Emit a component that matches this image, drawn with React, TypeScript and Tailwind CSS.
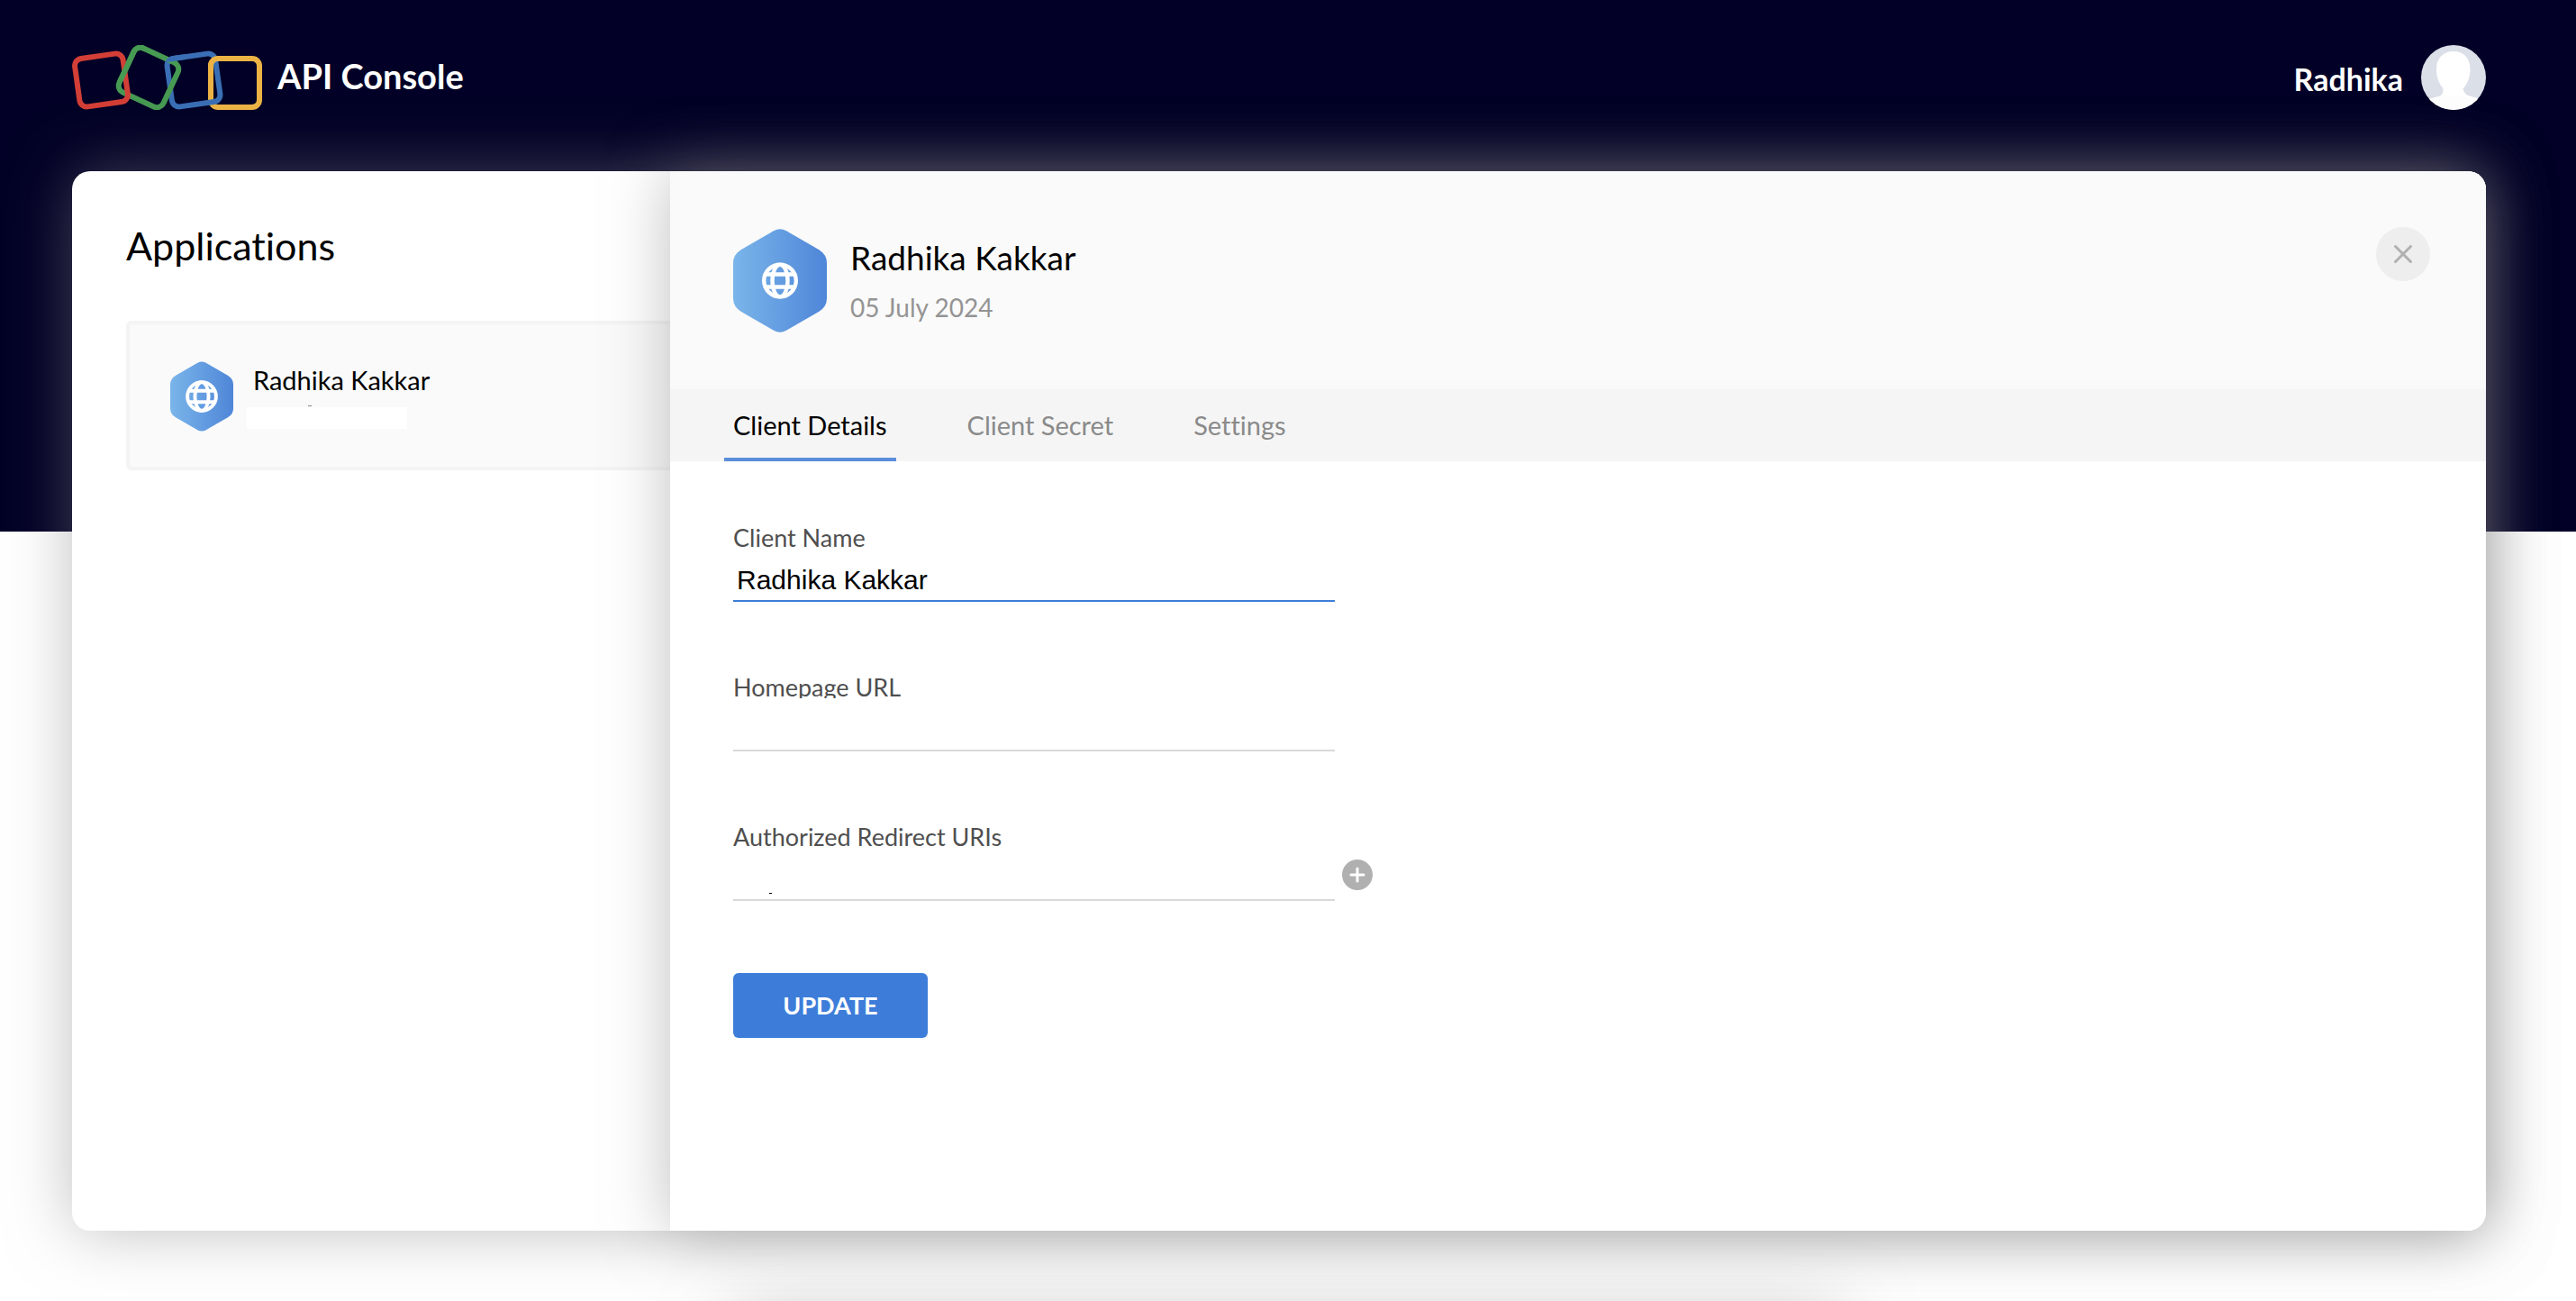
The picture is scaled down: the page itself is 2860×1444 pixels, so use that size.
import type { ReactNode } from "react";

function Logo() {
  return (
    <svg viewBox="0 0 212 72" className="h-18 w-53" fill="none" strokeWidth="6" aria-hidden="true">
      <defs>
        <clipPath id="weave-red-green">
          <rect x="40" y="0" width="40" height="40" />
        </clipPath>
        <clipPath id="weave-green-blue">
          <rect x="102" y="6" width="24" height="12.500" />
        </clipPath>
        <clipPath id="weave-blue-yellow">
          <rect x="148" y="0" width="30" height="34" />
        </clipPath>
      </defs>
      <rect x="154" y="15" width="54" height="54" rx="8" stroke="#ecb344" />
      <rect x="108" y="12" width="54" height="54" rx="8" stroke="#3a6fb5" transform="rotate(-8 135 39)" />
      <rect x="58" y="9" width="54" height="54" rx="8" stroke="#479a52" transform="rotate(25 85 36)" />
      <rect x="5.500" y="12" width="54" height="54" rx="8" stroke="#d33f36" transform="rotate(-8 32.500 39)" />
      <g clipPath="url(#weave-red-green)">
        <rect x="58" y="9" width="54" height="54" rx="8" stroke="#479a52" transform="rotate(25 85 36)" />
      </g>
      <g clipPath="url(#weave-green-blue)">
        <rect x="108" y="12" width="54" height="54" rx="8" stroke="#3a6fb5" transform="rotate(-8 135 39)" />
      </g>
      <g clipPath="url(#weave-blue-yellow)">
        <rect x="154" y="15" width="54" height="54" rx="8" stroke="#ecb344" />
      </g>
    </svg>
  );
}

function Hexagon({ className, id, globe }: { className: string; id: string; globe: number }) {
  const scale = globe / 40;
  return (
    <svg viewBox="0 0 104 115" className={className} aria-hidden="true">
      <defs>
        <linearGradient id={id} x1="0" y1="0" x2="1" y2="0">
          <stop offset="0" stopColor="#7ab5ea" />
          <stop offset="1" stopColor="#4f86d8" />
        </linearGradient>
      </defs>
      <path
        fill={`url(#${id})`}
        d="M45 2.2Q52 -1.6 59 2.2L95 23Q104 28.500 104 38V77Q104 86.500 95 92L59 112.800Q52 116.600 45 112.800L9 92Q0 86.500 0 77V38Q0 28.500 9 23Z"
      />
      <g transform={`translate(52 57.500) scale(${scale})`} fill="none" stroke="#fff" strokeWidth="4.400">
        <circle r="17.800" />
        <ellipse rx="8.500" ry="17.800" />
        <path d="M-16.500 -7H16.500M-16.500 7H16.500" />
      </g>
    </svg>
  );
}

function Avatar() {
  return (
    <svg viewBox="0 0 72 72" className="size-18 rounded-full" role="img" aria-label="Profile photo">
      <rect width="72" height="72" fill="#dbdfe8" />
      <path
        fill="#fff"
        d="M36 7C24 7 17 15 17 27C17 36 20 43 24.500 48C24.500 52 24 55 21 56.500L9 59.500V72H64V59.500L52 56C49 54.500 47.500 52 46.500 49C51 43.500 54.500 36 54.500 27C54.500 15 48 7 36 7Z"
      />
    </svg>
  );
}

function Field({ id, label, value, active, children }: { id: string; label: string; value?: string; active?: boolean; children?: ReactNode }) {
  return (
    <div>
      <label htmlFor={id} className="block h-[29px] text-[27px] leading-[34px] text-[#4f4f4f]">
        {label}
      </label>
      <div className="relative flex items-center gap-2">
        <input
          id={id}
          type="text"
          defaultValue={value}
          className={`h-[59px] w-full max-w-[668px] border-b-2 bg-white px-1 pt-3 font-['Liberation_Sans',Arial,sans-serif] text-[30px] text-black outline-none ${
            active ? "border-[#3d7dd9]" : "border-[#d9d9d9]"
          }`}
        />
        {children}
      </div>
    </div>
  );
}

const tabs = ["Client Details", "Client Secret", "Settings"];

export default function App() {
  return (
    <div className="relative flex min-h-screen flex-col overflow-hidden bg-white font-[Lato,sans-serif] text-black [font-variant-ligatures:none]">
      <div className="absolute inset-x-0 top-0 h-[590px] bg-[#020026]" />
      <header className="relative flex items-start justify-between pt-[50px] pr-[100px] pl-20 text-white">
        <a href="#" className="flex items-start gap-4">
          <Logo />
          <span className="pt-[11px] text-[38px] leading-[46px] font-bold">API Console</span>
        </a>
        <button type="button" className="flex items-center gap-5">
          <span className="pt-1 text-[34px] leading-10 font-bold">Radhika</span>
          <Avatar />
        </button>
      </header>

      <main className="relative mt-17 mr-[100px] mb-[78px] ml-20 flex flex-1 rounded-[20px] bg-white shadow-[0_0_70px_rgba(128,128,128,0.5)]">
        <section className="w-[664px] shrink-0 pt-14 pl-15">
          <h1 className="text-[43px] leading-[54px]">Applications</h1>
          <button
            type="button"
            className="mt-14 flex h-[166px] w-full items-center gap-[22px] rounded-l-md border-4 border-r-0 border-[#f4f4f4] bg-[#fafafa] pt-0.5 pl-[45px] text-left"
          >
            <Hexagon className="h-[78px] w-[70px]" id="hex-small" globe={53} />
            <span className="relative flex flex-col gap-3">
              <span className="text-[29px] leading-9">Radhika Kakkar</span>
              <span className="-ml-[7px] h-6 w-[178px] bg-white" />
              <span className="absolute top-[46px] left-[61px] h-px w-1 bg-[#888]" />
            </span>
          </button>
        </section>

        <section className="relative flex-1 rounded-r-[20px] bg-white shadow-[0_0_70px_rgba(128,128,128,0.5)]">
          <div className="flex h-[242px] justify-between rounded-tr-[20px] bg-[#fafafa] pt-16 pr-[62px] pl-[70px]">
            <div className="flex items-start gap-[26px]">
              <Hexagon className="h-[115px] w-[104px]" id="hex-large" globe={40} />
              <div className="pt-[9px]">
                <h2 className="text-[37px] leading-[46px]">Radhika Kakkar</h2>
                <p className="mt-[15px] text-[28px] leading-[34px] text-[#949494]">05 July 2024</p>
              </div>
            </div>
            <button type="button" aria-label="Close" className="-mt-0.5 flex size-15 items-center justify-center rounded-full bg-[#eee]">
              <svg viewBox="0 0 20 20" className="size-5 overflow-visible" stroke="#b0b0b0" strokeWidth="3" strokeLinecap="round" aria-hidden="true">
                <path d="M1.500 1.500L18.500 18.500M18.500 1.500L1.500 18.500" />
              </svg>
            </button>
          </div>

          <nav className="flex h-20 gap-[69px] bg-[#f5f5f5] pl-15">
            {tabs.map((tab, i) => (
              <button
                key={tab}
                type="button"
                className={`border-b-4 px-2.5 pt-1 text-[29px] ${i === 0 ? "border-[#5b8ddb] text-black" : "border-transparent text-[#8a8a8a]"}`}
              >
                {tab}
              </button>
            ))}
          </nav>

          <form className="flex flex-col gap-[78px] pt-17 pl-[70px]" onSubmit={(e) => e.preventDefault()}>
            <Field id="client-name" label="Client Name" value="Radhika Kakkar" active />
            <Field id="homepage-url" label="Homepage URL" />
            <Field id="redirect-uris" label="Authorized Redirect URIs">
              <span className="absolute bottom-2 left-10 h-px w-[3px] bg-black" />
              <button type="button" aria-label="Add redirect URI" className="flex size-[34px] items-center justify-center rounded-full bg-[#b0b0b0]">
                <svg viewBox="0 0 18 18" className="size-[18px]" stroke="#fff" strokeWidth="3" strokeLinecap="round" aria-hidden="true">
                  <path d="M9 2V16M2 9H16" />
                </svg>
              </button>
            </Field>
            <button type="submit" className="mt-0.5 h-18 w-[216px] rounded-md bg-[#3d7dd9] text-[27px] font-bold text-white">
              UPDATE
            </button>
          </form>
        </section>
      </main>

      <div className="absolute inset-x-0 top-full flex justify-center">
        <div className="mt-5 h-24 w-[1230px] shrink-0 bg-white shadow-[0_0_80px_rgba(128,128,128,0.5)]" />
      </div>
    </div>
  );
}
